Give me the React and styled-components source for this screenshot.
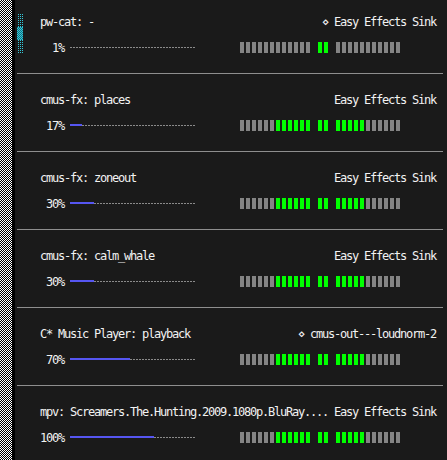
import React from "react";
import styled, { createGlobalStyle } from "styled-components";

const GlobalStyle = createGlobalStyle`
  html, body {
    margin: 0;
    background: #1a1a1a;
  }
  body {
    font-family: "DejaVu Sans Mono", "Liberation Mono", monospace;
    font-size: 12px;
    letter-spacing: -1.224px;
    color: #f2f2f2;
  }
`;

// one terminal cell is 6x13
const CELL_W = 6;
const BAR_CELLS = 21;
const MAX_VOLUME = 150;

const streams = [
  { name: "pw-cat: -", sink: "Easy Effects Sink", marked: true, volume: 1, peak: [0, 0] },
  { name: "cmus-fx: places", sink: "Easy Effects Sink", volume: 17, peak: [6, 5] },
  { name: "cmus-fx: zoneout", sink: "Easy Effects Sink", volume: 30, peak: [6, 5] },
  { name: "cmus-fx: calm_whale", sink: "Easy Effects Sink", volume: 30, peak: [6, 5] },
  { name: "C* Music Player: playback", sink: "cmus-out---loudnorm-2", marked: true, volume: 70, peak: [6, 5] },
  {
    name: "mpv: Screamers.The.Hunting.2009.1080p.BluRay....",
    sink: "Easy Effects Sink",
    volume: 100,
    peak: [6, 5],
  },
];

const Page = styled.div`
  display: flex;
  height: 100vh;
  overflow: hidden;
`;

const Edge = styled.div`
  flex: none;
  width: 12px;
  border-right: 3px solid #000;
  background-color: #fff;
  background-image: conic-gradient(#000 25%, #fff 0 50%, #000 0 75%, #fff 0);
  background-size: 2px 2px;
`;

const Panel = styled.div`
  position: relative;
  flex: 1;
  padding: 1px 4px 0 2px;
`;

const Thumb = styled.div`
  position: absolute;
  left: 2px;
  top: 14px;
  width: 6px;
  display: flex;
  flex-direction: column;
`;

const Shade = styled.div`
  height: 13px;
  background-image: ${({ $dense }) =>
    $dense
      ? "conic-gradient(#35c6d6 25%, #127080 0 50%, #35c6d6 0 75%, #127080 0)"
      : "conic-gradient(#35c6d6 25%, transparent 0)"};
  background-size: 2px 2px;
`;

const Stream = styled.section`
  display: flex;
  flex-direction: column;
  height: 78px;
  padding-top: 13px;
  box-sizing: border-box;
`;

const TitleRow = styled.div`
  display: flex;
  justify-content: space-between;
  height: 13px;
  line-height: 13px;
  padding: 2px 7px 0 23px;
  margin-bottom: -2px;
  white-space: pre;
`;

const MeterRow = styled.div`
  display: flex;
  align-items: flex-start;
  height: 13px;
  margin-top: 13px;
  padding-left: 23px;
`;

const Percent = styled.span`
  width: ${CELL_W * 4}px;
  margin-top: 2px;
  line-height: 13px;
  text-align: right;
  white-space: pre;
`;

const Track = styled.div`
  width: ${CELL_W * BAR_CELLS}px;
  height: 13px;
  margin-left: ${CELL_W}px;
  background-image: repeating-linear-gradient(to right, #8a8a8a 0 2px, transparent 2px 3px);
  background-size: 100% 1px;
  background-position: 0 7px;
  background-repeat: no-repeat;
`;

const Fill = styled.div`
  height: 2px;
  margin-top: 6px;
  background: #5656f2;
`;

const Meter = styled.div`
  display: flex;
  margin-left: 44px;
  padding-top: 2px;
`;

const Segment = styled.span`
  width: 4px;
  height: 11px;
  margin-right: 2px;
  background: ${({ $lit }) => ($lit ? "#00ff00" : "#848484")};
`;

const Gap = styled.span`
  width: ${CELL_W}px;
`;

const Divider = styled.hr`
  height: 1px;
  margin: 20px 0 0;
  border: 0;
  background: #8e8e8e;
`;

const VolumeBar = ({ volume }) => {
  const cells = Math.round((volume / MAX_VOLUME) * BAR_CELLS);
  return (
    <Track>
      {cells > 0 && <Fill style={{ width: cells * CELL_W }} />}
    </Track>
  );
};

// stereo peak meter: left channel grows outward to the left, right to the right
const PeakMeter = ({ peak: [left, right] }) => {
  const leftCells = Array.from({ length: 12 }, (_, i) => i >= 12 - left);
  const rightCells = Array.from({ length: 11 }, (_, i) => i < right);
  return (
    <Meter>
      {leftCells.map((lit, i) => (
        <Segment key={`l${i}`} $lit={lit} />
      ))}
      <Gap />
      <Segment $lit />
      <Segment $lit />
      <Gap />
      {rightCells.map((lit, i) => (
        <Segment key={`r${i}`} $lit={lit} />
      ))}
    </Meter>
  );
};

const StreamItem = ({ stream }) => (
  <Stream>
    <TitleRow>
      <span>{stream.name}</span>
      <span>{(stream.marked ? "⋄ " : "") + stream.sink}</span>
    </TitleRow>
    <MeterRow>
      <Percent>{`${stream.volume}%`}</Percent>
      <VolumeBar volume={stream.volume} />
      <PeakMeter peak={stream.peak} />
    </MeterRow>
    <Divider />
  </Stream>
);

const App = () => (
  <Page>
    <GlobalStyle />
    <Edge />
    <Panel>
      <Thumb>
        <Shade />
        <Shade $dense />
        <Shade />
      </Thumb>
      {streams.map(s => (
        <StreamItem key={s.name} stream={s} />
      ))}
    </Panel>
  </Page>
);

export default App;
